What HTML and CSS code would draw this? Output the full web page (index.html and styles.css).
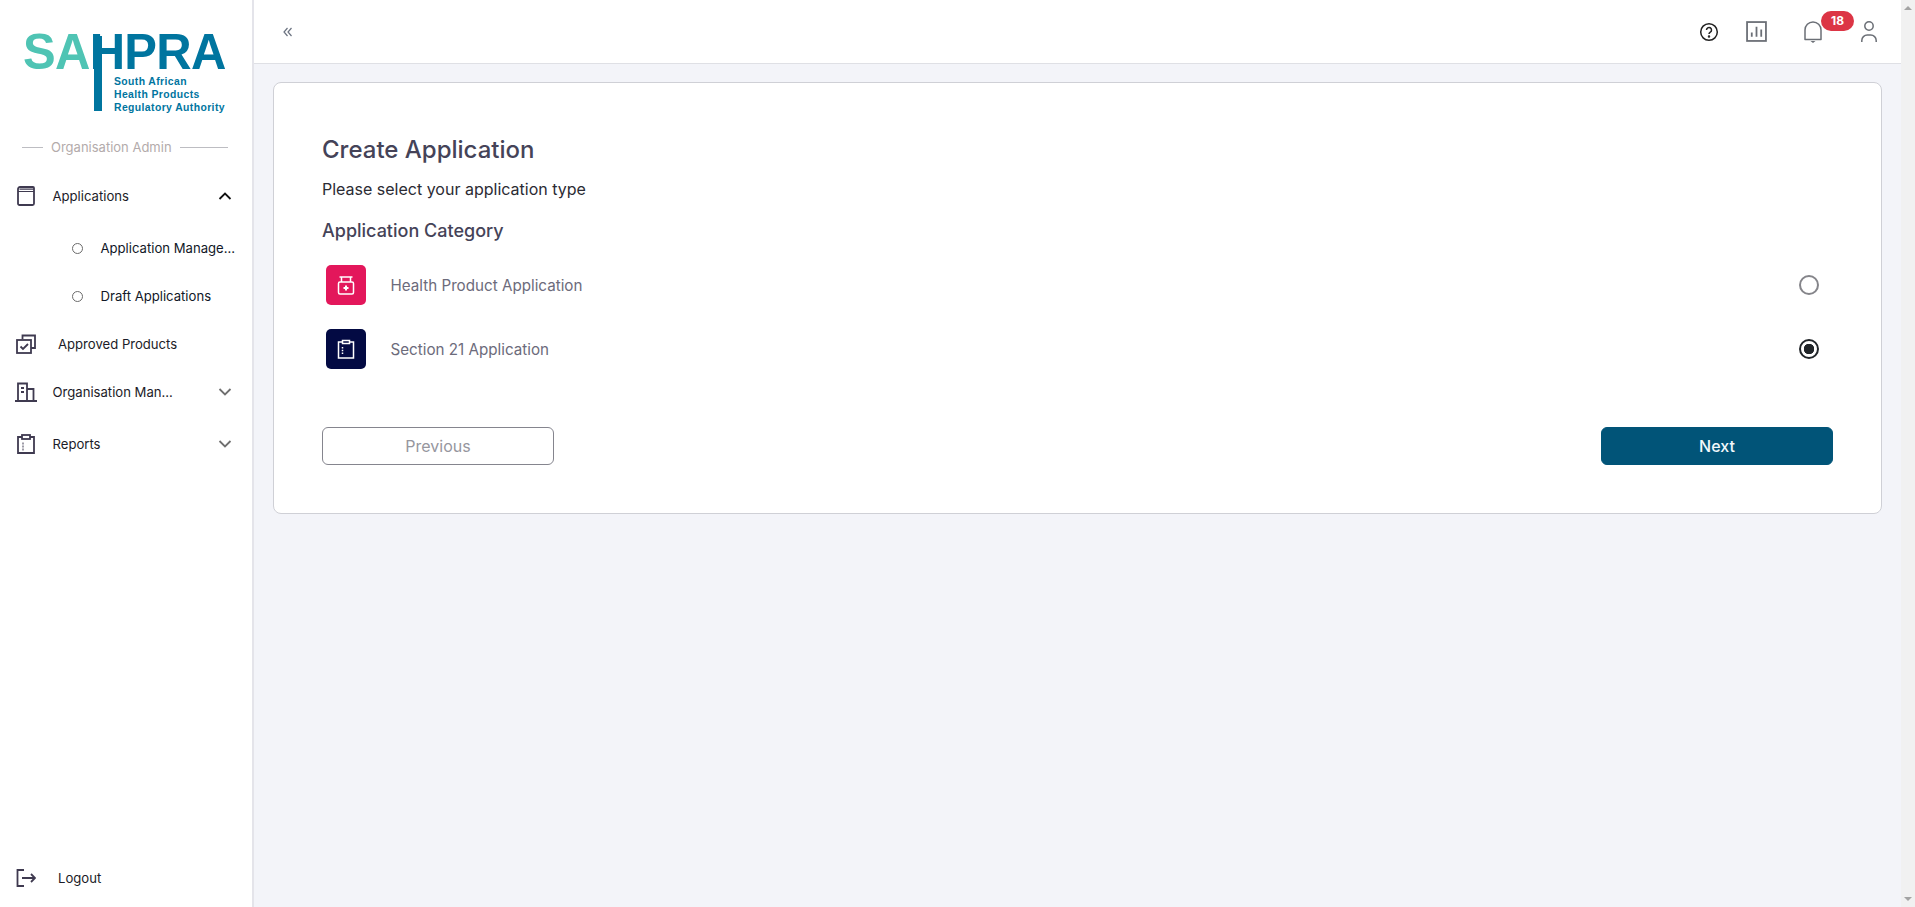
FILE: index.html
```html
<!DOCTYPE html>
<html lang="en">
<head>
<meta charset="utf-8">
<title>SAHPRA - Create Application</title>
<link rel="stylesheet" href="styles.css">
</head>
<body>
<div class="app">
  <aside class="sidebar">
    <div class="logo">
      <div class="logo-stem"></div>
      <div class="logo-word"><span class="teal">SA</span><span class="blue">HPRA</span></div>
      <div class="logo-sub">South African<br>Health Products<br>Regulatory Authority</div>
    </div>
    <div class="role"><span class="role-line short"></span><span>Organisation Admin</span><span class="role-line long"></span></div>
    <nav class="nav">
      <div class="nav-item top">
        <svg class="nav-icon" viewBox="0 0 20 20" fill="none" stroke="#3f3a50"><path d="M4 1h13a1 1 0 0 1 1 1V17.500a1.500 1.500 0 0 1-1.500 1.500H3.500A1.500 1.500 0 0 1 2 17.500V3a2 2 0 0 1 2-2z"/><path d="M2 5.500h16M3.500 3.200h14.500" stroke-width="1.200"/></svg>
        <span class="nav-label">Applications</span>
        <svg class="chev" viewBox="0 0 14 8" fill="none" stroke="#111" stroke-width="1.800"><path d="M1.500 7L7 1.500 12.500 7"/></svg>
      </div>
      <div class="sub-item first"><span class="dot"></span><span>Application Manage...</span></div>
      <div class="sub-item second"><span class="dot"></span><span>Draft Applications</span></div>
      <div class="nav-item approved">
        <svg class="nav-icon" viewBox="0 0 20 20" fill="none" stroke="#3f3a50"><path d="M6.500 5V1.500H19V14h-4"/><rect x="1" y="6" width="14" height="13"/><path d="M4.500 12.500l2.500 2.500 5-5"/></svg>
        <span class="nav-label wide">Approved Products</span>
      </div>
      <div class="nav-item org">
        <svg class="nav-icon org-icon" viewBox="0 0 22 20" fill="none" stroke="#3f3a50"><path d="M0 19h22M3 19V1.500h9V19M12 7h6.500V19"/><path d="M6 6h3M6 10h3"/></svg>
        <span class="nav-label">Organisation Man...</span>
        <svg class="chev" viewBox="0 0 14 8" fill="none" stroke="#6f6f6f" stroke-width="1.800"><path d="M1.500 1L7 6.500 12.500 1"/></svg>
      </div>
      <div class="nav-item reports">
        <svg class="nav-icon" viewBox="0 0 20 20" fill="none" stroke="#3f3a50"><path d="M6 3H2v16h16V3h-4"/><rect x="6" y="1" width="8" height="4"/><path d="M6.500 9.500h1M6.500 12.500h1M6.500 15.500h1"/></svg>
        <span class="nav-label">Reports</span>
        <svg class="chev" viewBox="0 0 14 8" fill="none" stroke="#6f6f6f" stroke-width="1.800"><path d="M1.500 1L7 6.500 12.500 1"/></svg>
      </div>
    </nav>
    <div class="nav-item logout">
      <svg class="nav-icon" viewBox="0 0 20 20" fill="none" stroke="#3f3a50"><path d="M8 2H1.500v16H8"/><path d="M6 10h13M15 6l4 4-4 4"/></svg>
      <span class="nav-label wide">Logout</span>
    </div>
  </aside>
  <div class="main">
    <header class="topbar">
      <svg class="collapse" viewBox="0 0 10 10" fill="none" stroke="#6b7280" stroke-width="1.200"><path d="M4.500 1L1 5l3.500 4M8.500 1L5 5l3.500 4"/></svg>
      <div class="top-icons">
        <svg class="ti help" viewBox="0 0 20 20" fill="none" stroke="#222" stroke-width="1.500"><circle cx="10" cy="10" r="8.300"/><path d="M7.500 8a2.500 2.500 0 1 1 3.800 2.100c-.9.600-1.300 1-1.300 2"/><circle cx="10" cy="14.500" r=".5" fill="#222"/></svg>
        <svg class="ti chart" viewBox="0 0 20 20" fill="none" stroke="#6b6f76" stroke-width="1.700"><rect x="1" y="1" width="18" height="18"/><path d="M5.500 15v-4M10 15V5.500M14.500 15V8"/></svg>
        <div class="bell-wrap">
          <svg class="ti bell" viewBox="0 0 18 22" fill="none" stroke="#6b6f76" stroke-width="1.500"><path d="M1 18.500V9a8 8 0 0 1 16 0v9.500z" stroke-linejoin="round"/><path d="M6.500 20h5L9 22z" fill="#6b6f76" stroke="none"/></svg>
          <span class="badge">18</span>
        </div>
        <svg class="ti user" viewBox="0 0 16 21" fill="none" stroke="#6b6f76" stroke-width="1.500"><circle cx="8" cy="5" r="4.200"/><path d="M.8 21v-1.500A5.500 5.500 0 0 1 6.300 14h3.400a5.500 5.500 0 0 1 5.500 5.500V21"/></svg>
      </div>
    </header>
    <main class="content">
      <section class="card">
        <h1 class="title">Create Application</h1>
        <p class="lead">Please select your application type</p>
        <h2 class="category">Application Category</h2>
        <div class="option">
          <span class="opt-icon pink">
            <svg viewBox="0 0 20 20" fill="none" stroke="#fff" stroke-width="1.500"><path d="M3.500 2h13M5.500 2v5M14.500 2v5"/><rect x="2.500" y="7" width="15" height="12" rx="1.500"/><path d="M10 10.500v5M7.500 13h5" stroke-width="2"/></svg>
          </span>
          <span class="opt-label">Health Product Application</span>
          <span class="radio"></span>
        </div>
        <div class="option">
          <span class="opt-icon navy">
            <svg viewBox="0 0 20 20" fill="none" stroke="#fff" stroke-width="1.500"><path d="M6.500 3H2.500v16h15V3h-4"/><rect x="6.500" y="1.500" width="7" height="3"/><path d="M6.500 8v8" stroke-dasharray="1.500 1.200"/></svg>
          </span>
          <span class="opt-label">Section 21 Application</span>
          <span class="radio on"></span>
        </div>
        <div class="actions">
          <button class="btn prev" type="button">Previous</button>
          <button class="btn next" type="button">Next</button>
        </div>
      </section>
    </main>
  </div>
  <div class="scrollbar">
    <span class="arrow up"></span>
    <span class="arrow down"></span>
  </div>
</div>
</body>
</html>
```
FILE: styles.css
```css
* { box-sizing: border-box; }
html, body { margin: 0; height: 100%; overflow: hidden; }
body { font-family: Inter, "Liberation Sans", sans-serif; background: #f3f4f9; color: #222; }
.app { display: flex; height: 907px; }

.sidebar { width: 254px; flex: none; background: #fff; border-right: 2px solid #e4e4ea; display: flex; flex-direction: column; }
.logo { position: relative; height: 136px; flex: none; }
.logo-word { position: absolute; left: 23px; top: 28px; font: 700 49px/1 "Liberation Sans", sans-serif; letter-spacing: -.7px; white-space: nowrap; transform-origin: 0 41px; transform: scaleY(1.03); }
.teal { color: #4fc4b4; }
.blue { color: #00759f; }
.logo-stem { position: absolute; left: 93.500px; top: 36px; width: 8px; height: 75px; background: #00759f; }
.logo-sub { position: absolute; left: 114px; top: 75px; font: 700 10.400px/13px "Liberation Sans", sans-serif; color: #00759f; letter-spacing: .4px; white-space: nowrap; }

.role { height: 22px; display: flex; align-items: center; gap: 8px; padding-left: 22px; font-size: 13px; color: #b3abab; flex: none; }
.role-line { height: 1px; background: #bdbdc2; }
.role-line.short { width: 21px; }
.role-line.long { width: 48px; }

.nav { flex: 1; display: flex; flex-direction: column; padding-top: 16px; }
.nav-item { display: flex; align-items: center; height: 42px; padding-left: 16px; font-size: 13.120px; color: #1c1c28; flex: none; }
.nav-icon { width: 20px; height: 20px; flex: none; stroke-width: 1.800; }
.org-icon { width: 22px; margin-left: -1px; margin-right: -1px; }
.nav-label { margin-left: 16.500px; flex: 1; white-space: nowrap; }
.nav-label.wide { margin-left: 22px; }
.chev { width: 14px; height: 8px; flex: none; margin-right: 20px; }
.top { margin-top: 1px; }
.sub-item { display: flex; align-items: center; height: 48px; padding-left: 72px; gap: 17.500px; font-size: 13.120px; color: #111827; white-space: nowrap; }
.sub-item.first { margin-top: 7px; }
.dot { width: 11px; height: 11px; border: 1px solid #6b6b6b; border-radius: 50%; flex: none; }
.approved { height: 48px; }
.org { height: 48px; }
.reports { height: 56px; }
.logout { height: 58px; }

.main { flex: 1; min-width: 0; display: flex; flex-direction: column; }
.topbar { height: 64px; flex: none; background: #fff; border-bottom: 1px solid #dfe0e5; display: flex; align-items: center; padding: 0 24px 0 29px; }
.collapse { width: 10px; height: 10px; }
.top-icons { margin-left: auto; display: flex; align-items: center; }
.ti { display: block; flex: none; }
.help { width: 20px; height: 20px; }
.chart { width: 21px; height: 21px; margin-left: 27px; }
.bell-wrap { position: relative; margin-left: 37px; }
.bell { width: 18px; height: 22px; }
.badge { position: absolute; left: 17px; top: -10px; width: 33px; height: 20px; border-radius: 10px; background: #dc3545; color: #fff; font-size: 12px; font-weight: 700; line-height: 20px; text-align: center; }
.user { width: 16px; height: 21px; margin-left: 39px; }

.content { flex: 1; padding: 18px 19px 0 19px; }
.card { background: #fff; border: 1px solid #cfd0d6; border-radius: 8px; height: 432px; padding: 51px 48px 0 48px; }
.title { margin: 0; font-size: 24px; font-weight: 500; line-height: 32px; color: #454358; }
.lead { margin: 11px 0 0; font-size: 16px; line-height: 24px; color: #2b2b33; }
.category { margin: 16px 0 0; font-size: 18px; font-weight: 500; line-height: 28px; color: #454358; }
.option { display: flex; align-items: center; height: 64px; padding: 0 14px 0 4px; }
.category + .option { margin-top: 8px; }
.opt-icon { width: 40px; height: 40px; border-radius: 5px; display: flex; align-items: center; justify-content: center; flex: none; }
.opt-icon svg { width: 20px; height: 20px; }
.pink { background: #e3175b; }
.navy { background: #030a43; }
.opt-label { margin-left: 24.500px; flex: 1; font-size: 15.200px; color: #6c6b7b; }
.radio { width: 20px; height: 20px; border: 2px solid #85858a; border-radius: 50%; flex: none; }
.radio.on { border-color: #212529; background: radial-gradient(circle, #212529 0 5px, #fff 5.500px); }
.actions { display: flex; justify-content: space-between; margin-top: 46px; }
.btn { width: 232px; height: 38px; border-radius: 6px; font: 500 16px Inter, "Liberation Sans", sans-serif; }
.prev { background: #fff; border: 1px solid #85858e; color: #96969e; font-weight: 400; }
.next { background: #015478; border: 1px solid #015478; color: #f2f8fb; }

.scrollbar { width: 14px; flex: none; background: #f1f1f1; display: flex; flex-direction: column; justify-content: space-between; align-items: center; padding: 6px 0; }
.arrow { width: 0; height: 0; border-left: 4px solid transparent; border-right: 4px solid transparent; }
.up { border-bottom: 4px solid #a3a3a3; }
.down { border-top: 4px solid #a3a3a3; }
```
